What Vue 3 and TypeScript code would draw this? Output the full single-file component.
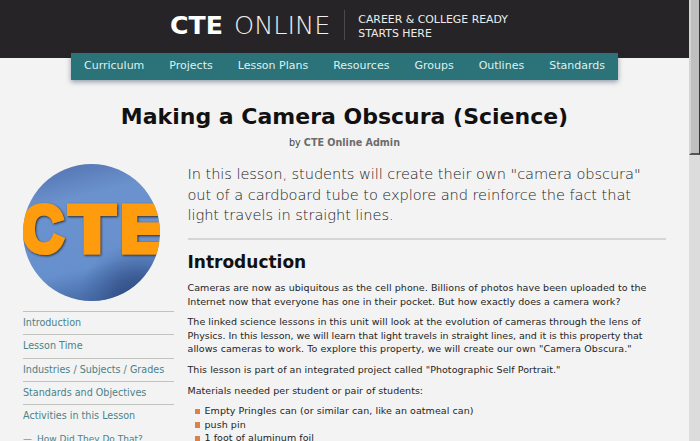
<script setup lang="ts">
interface Line { text: string; tracking: number }

const nav: string[] = ['Curriculum', 'Projects', 'Lesson Plans', 'Resources', 'Groups', 'Outlines', 'Standards']
const sections: string[] = ['Introduction', 'Lesson Time', 'Industries / Subjects / Grades', 'Standards and Objectives', 'Activities in this Lesson']
const lead: string[] = [
  'In this lesson, students will create their own "camera obscura"',
  'out of a cardboard tube to explore and reinforce the fact that',
  'light travels in straight lines.',
]
const paragraphs: Line[][] = [
  [
    { text: 'Cameras are now as ubiquitous as the cell phone. Billions of photos have been uploaded to the', tracking: 0.06 },
    { text: 'Internet now that everyone has one in their pocket. But how exactly does a camera work?', tracking: 0.045 },
  ],
  [
    { text: 'The linked science lessons in this unit will look at the evolution of cameras through the lens of', tracking: 0.045 },
    { text: 'Physics. In this lesson, we will learn that light travels in straight lines, and it is this property that', tracking: -0.027 },
    { text: 'allows cameras to work. To explore this property, we will create our own "Camera Obscura."', tracking: 0.07 },
  ],
  [{ text: 'This lesson is part of an integrated project called "Photographic Self Portrait."', tracking: 0.05 }],
  [{ text: 'Materials needed per student or pair of students:', tracking: 0.03 }],
]
const materials: string[] = ['Empty Pringles can (or similar can, like an oatmeal can)', 'push pin', '1 foot of aluminum foil']
</script>

<template>
  <div class="window">
    <div class="page">
      <header class="banner">
        <div class="logo"><b>CTE</b><span>ONLINE</span></div>
        <div class="tagline">CAREER &amp; COLLEGE READY<br />STARTS HERE</div>
      </header>
      <nav class="nav">
        <a v-for="item in nav" :key="item">{{ item }}</a>
      </nav>
      <h1>Making a Camera Obscura (Science)</h1>
      <p class="byline">by <b>CTE Online Admin</b></p>
      <div class="columns">
        <aside>
          <svg class="picture" viewBox="0 0 137 137">
            <defs>
              <linearGradient id="sky" x1="0.3" y1="0" x2="0.55" y2="1">
                <stop offset="0" stop-color="#5576b2" />
                <stop offset="0.25" stop-color="#6b92cd" />
                <stop offset="0.75" stop-color="#6690cd" />
                <stop offset="1" stop-color="#4468a4" />
              </linearGradient>
              <radialGradient id="shade" cx="0.82" cy="1" r="0.42">
                <stop offset="0" stop-color="#2d4980" />
                <stop offset="0.4" stop-color="#36548c" stop-opacity="0.8" />
                <stop offset="1" stop-color="#4468a4" stop-opacity="0" />
              </radialGradient>
              <clipPath id="round"><circle cx="68.5" cy="68.5" r="68.5" /></clipPath>
              <filter id="glow" x="-10%" y="-20%" width="120%" height="140%">
                <feDropShadow dx="0.9" dy="1" stdDeviation="1.3" flood-color="#2a2a24" flood-opacity="1" />
              </filter>
            </defs>
            <g clip-path="url(#round)">
              <rect width="137" height="137" fill="url(#sky)" />
              <rect width="137" height="137" fill="url(#shade)" />
              <g class="letters" filter="url(#glow)">
                <text x="-1.1" y="87.8" textLength="41.7" lengthAdjust="spacingAndGlyphs">C</text>
                <text x="46" y="87.8" textLength="46" lengthAdjust="spacingAndGlyphs">T</text>
                <text x="96.9" y="87.8" textLength="46" lengthAdjust="spacingAndGlyphs">E</text>
              </g>
            </g>
          </svg>
          <ul class="sections">
            <li v-for="s in sections" :key="s">{{ s }}</li>
          </ul>
          <div class="sub"><i>—</i>How Did They Do That?</div>
        </aside>
        <main>
          <div class="lead"><div v-for="l in lead" :key="l">{{ l }}</div></div>
          <h2>Introduction</h2>
          <p v-for="(p, i) in paragraphs" :key="i">
            <span v-for="l in p" :key="l.text" :style="{ letterSpacing: l.tracking + 'px' }">{{ l.text }}</span>
          </p>
          <ul class="materials"><li v-for="m in materials" :key="m">{{ m }}</li></ul>
        </main>
      </div>
    </div>
    <div class="scrollbar"><div class="thumb"></div></div>
  </div>
</template>

<style>
body { overflow: hidden; }
</style>

<style scoped>
* { box-sizing: border-box; }
.window { display: flex; width: 700px; height: 441px; overflow: hidden; background: #f3f3f3; font-family: "DejaVu Sans", sans-serif; color: #242424; white-space: nowrap; }
.page { width: 689px; height: 441px; flex: none; overflow: hidden; }
.banner { height: 58px; background: #272427; padding: 10px 0 0 170px; display: flex; }
.logo { display: flex; width: 175px; height: 30px; line-height: 31px; font-size: 25.6px; color: #fff; border-right: 1px solid #4c494c; }
.logo b { width: 64px; font-size: 25.2px; }
.logo span { font-weight: 200; color: #f0f0f0; }
.tagline { padding: 3px 0 0 13.3px; font-size: 10.9px; line-height: 13.6px; color: #ececec; }
.nav { position: relative; width: 547px; height: 27px; margin: -5px 0 0 71px; padding: 0 13px 2px; display: flex; justify-content: space-between; align-items: center; background: #2b7378; box-shadow: 0 2px 5px rgba(30, 50, 80, .45); font-size: 11px; color: #dff0f0; }
h1 { margin: 23px 0 0; text-align: center; font-size: 22px; line-height: 27px; color: #111; }
.byline { margin: 6px 0 0; text-align: center; font-size: 9.6px; line-height: 14px; color: #444; }
.byline b { color: #6c6c6c; }
.columns { display: flex; padding: 14px 0 0 23px; }
aside { width: 150.5px; margin-right: 14px; flex: none; color: #4a8289; font-size: 9.6px; }
.picture { display: block; width: 137px; height: 137px; }
.letters { font: bold 66px "Liberation Sans", sans-serif; fill: #ff9c08; stroke: #ff9c08; stroke-width: 5px; }
.sections { list-style: none; margin: 10px 0 0; padding: 0; }
.sections li { height: 23.25px; line-height: 22.4px; border-top: 1px solid #c0c3be; }
.sub { line-height: 24px; font-size: 9px; }
.sub i { font-style: normal; color: #666; display: inline-block; width: 14px; }
main { width: 478px; }
.lead { height: 76px; border-bottom: 2px solid #d5d5d5; font-size: 14.6px; line-height: 20.5px; font-weight: 200; color: #222; letter-spacing: -.07px; }
h2 { margin: 11px 0 0; font-size: 17px; line-height: 22px; color: #111; }
p { margin: 0; }
main p { margin: 8px 0 7px; font-size: 9.5px; line-height: 13.6px; }
main p + p { margin-top: 0; }
main p span { display: block; }
.materials { list-style: none; margin: 0; padding: 0 0 0 7px; font-size: 9.5px; line-height: 13.6px; letter-spacing: .06px; }
.materials li { display: flex; align-items: center; gap: 4.5px; }
.materials li::before { content: ''; width: 5.5px; height: 5.5px; margin-top: 1px; background: #df8049; }
.scrollbar { width: 11px; height: 441px; background: #dcdcdc; }
.thumb { width: 11px; height: 155px; background: #bfbfbf; border-left: 2px solid #d4d4d4; border-right: 1px solid #333; border-bottom: 2px solid #555; }
</style>
